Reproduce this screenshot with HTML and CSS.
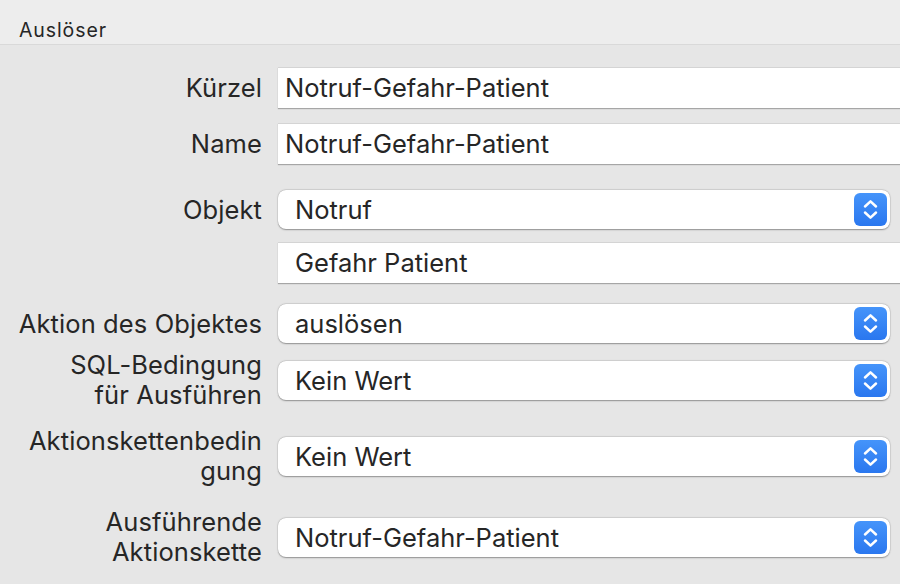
FILE: index.html
```html
<!DOCTYPE html>
<html lang="de">
<head>
<meta charset="utf-8">
<title>Auslöser</title>
<link rel="stylesheet" href="styles.css">
</head>
<body>
<div class="header"><span class="title">Auslöser</span></div>
<div class="form">
  <div class="row r1">
    <div class="lbl">Kürzel</div>
    <div class="field">Notruf-Gefahr-Patient</div>
  </div>
  <div class="row r2">
    <div class="lbl">Name</div>
    <div class="field">Notruf-Gefahr-Patient</div>
  </div>
  <div class="row r3">
    <div class="lbl">Objekt</div>
    <div class="select"><span class="val">Notruf</span><span class="btn"><svg width="33" height="33" viewBox="0 0 33 33"><path d="M11 13.5 L16.5 8.3 L22 13.5" /><path d="M11 19.5 L16.5 24.7 L22 19.5" /></svg></span></div>
  </div>
  <div class="row r4">
    <div class="lbl"></div>
    <div class="field wide-pad">Gefahr Patient</div>
  </div>
  <div class="row r5">
    <div class="lbl">Aktion des Objektes</div>
    <div class="select"><span class="val">auslösen</span><span class="btn"><svg width="33" height="33" viewBox="0 0 33 33"><path d="M11 13.5 L16.5 8.3 L22 13.5" /><path d="M11 19.5 L16.5 24.7 L22 19.5" /></svg></span></div>
  </div>
  <div class="row r6">
    <div class="lbl">SQL-Bedingung<br>für Ausführen</div>
    <div class="select"><span class="val">Kein Wert</span><span class="btn"><svg width="33" height="33" viewBox="0 0 33 33"><path d="M11 13.5 L16.5 8.3 L22 13.5" /><path d="M11 19.5 L16.5 24.7 L22 19.5" /></svg></span></div>
  </div>
  <div class="row r7">
    <div class="lbl">Aktionskettenbedin<br>gung</div>
    <div class="select"><span class="val">Kein Wert</span><span class="btn"><svg width="33" height="33" viewBox="0 0 33 33"><path d="M11 13.5 L16.5 8.3 L22 13.5" /><path d="M11 19.5 L16.5 24.7 L22 19.5" /></svg></span></div>
  </div>
  <div class="row r8">
    <div class="lbl">Ausführende<br>Aktionskette</div>
    <div class="select"><span class="val">Notruf-Gefahr-Patient</span><span class="btn"><svg width="33" height="33" viewBox="0 0 33 33"><path d="M11 13.5 L16.5 8.3 L22 13.5" /><path d="M11 19.5 L16.5 24.7 L22 19.5" /></svg></span></div>
  </div>
</div>
</body>
</html>
```
FILE: styles.css
```css
html, body {
  margin: 0;
  padding: 0;
}
body {
  width: 900px;
  height: 584px;
  overflow: hidden;
  background: #e6e6e6;
  font-family: Inter, "Liberation Sans", sans-serif;
  color: #262626;
}
.header {
  height: 44px;
  background: #ededed;
  border-bottom: 1px solid #d9d9d9;
  display: flex;
  align-items: flex-end;
  padding-left: 19px;
}
.title {
  font-size: 19.5px;
  letter-spacing: 0.9px;
  line-height: 22px;
  padding-bottom: 3px;
}
.form {
  padding-top: 22px;
  display: flex;
  flex-direction: column;
}
.row {
  display: grid;
  grid-template-columns: 262px 640px;
  column-gap: 16px;
  align-items: center;
}
.lbl {
  text-align: right;
  font-size: 25.5px;
  line-height: 30px;
  letter-spacing: 0.1px;
  white-space: nowrap;
}
.field {
  height: 41px;
  background: #fff;
  box-sizing: border-box;
  border-top: 1px solid #d4d4d4;
  box-shadow: 0 1px 1px rgba(0,0,0,0.28);
  font-size: 25.5px;
  line-height: 40px;
  padding-left: 7px;
  white-space: nowrap;
}
.field.wide-pad {
  padding-left: 17px;
}
.select {
  width: 612px;
  height: 39px;
  box-sizing: border-box;
  background: #fff;
  border-radius: 8px;
  box-shadow: 0 0.5px 1.5px rgba(0,0,0,0.35), 0 0 0 0.5px rgba(0,0,0,0.08);
  display: flex;
  align-items: center;
  justify-content: space-between;
  padding-left: 17px;
  padding-right: 3px;
  font-size: 25.5px;
}
.btn {
  width: 33px;
  height: 33px;
  border-radius: 6px;
  background: linear-gradient(#4594fa, #2a77ef);
  display: flex;
}
.btn svg path {
  fill: none;
  stroke: #fff;
  stroke-width: 2.5;
  stroke-linecap: round;
  stroke-linejoin: round;
}
.r2 { margin-top: 15px; }
.r3 { margin-top: 26px; }
.r4 { margin-top: 13px; }
.r5 { margin-top: 21px; }
.r6 { margin-top: 7px; }
.r7 { margin-top: 16px; }
.r8 { margin-top: 21px; }
```
